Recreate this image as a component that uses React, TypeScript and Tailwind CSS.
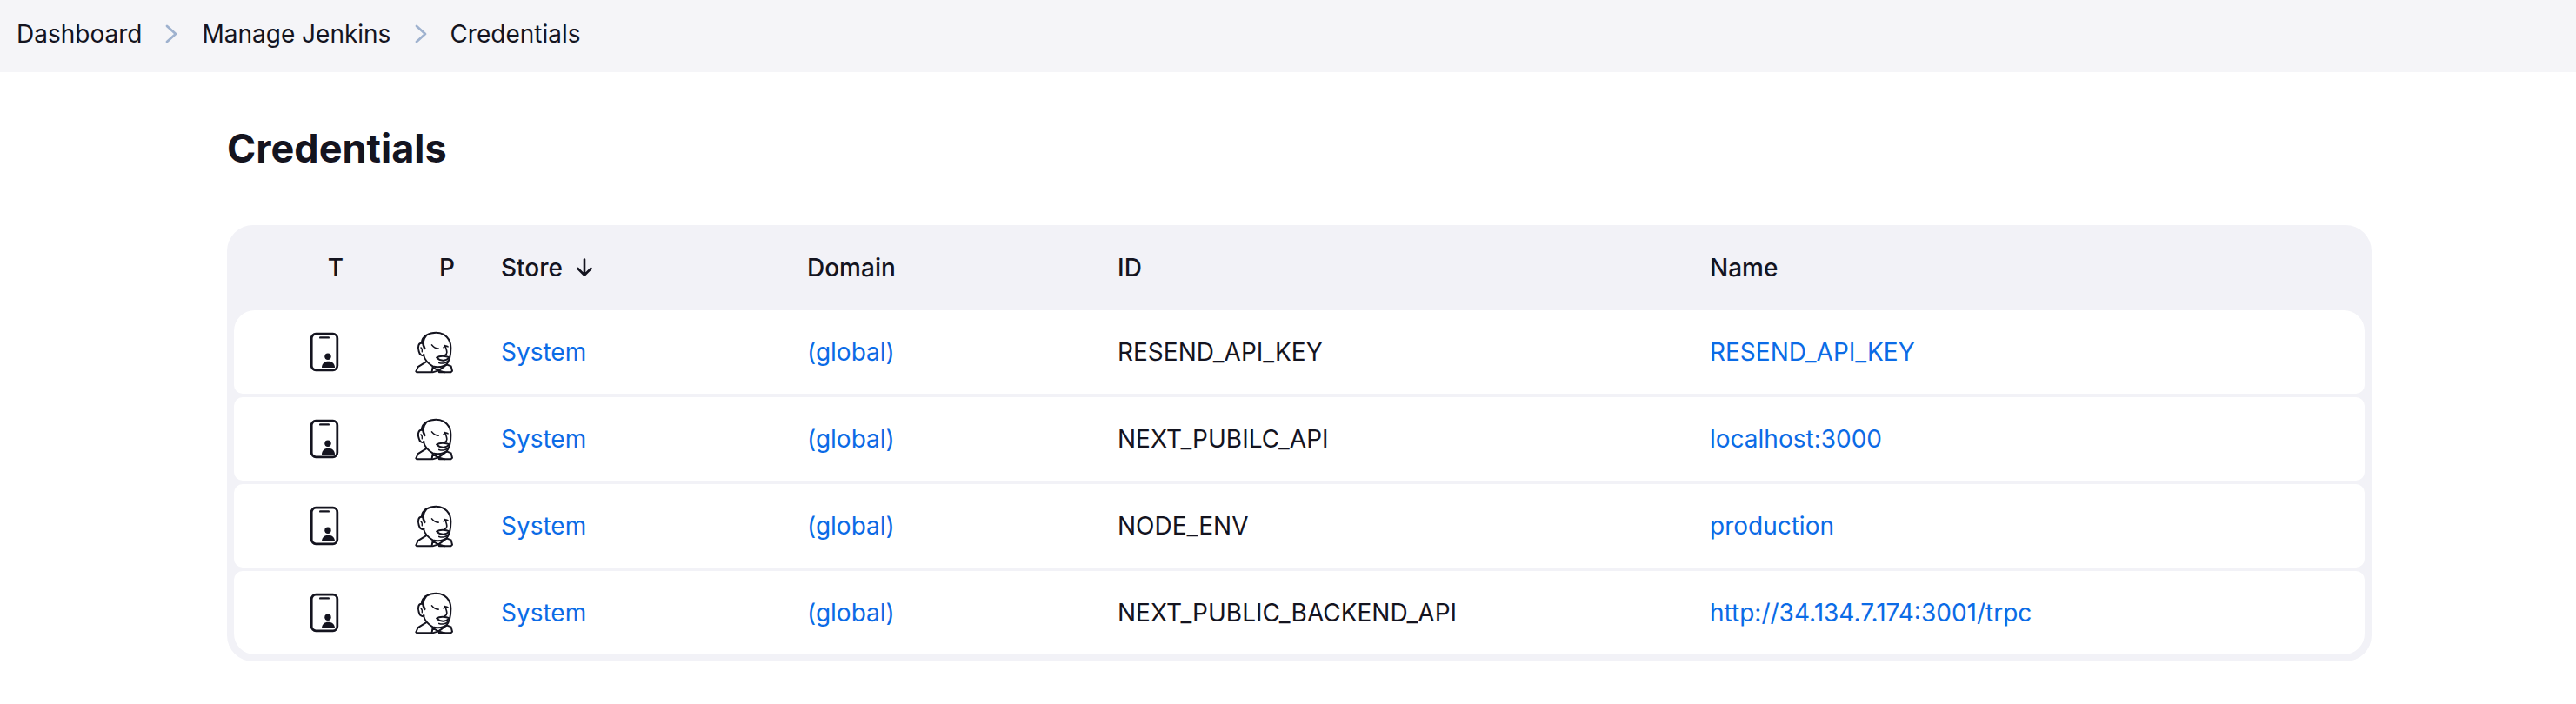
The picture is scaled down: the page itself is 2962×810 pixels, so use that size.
const rows = [
  ["RESEND_API_KEY", "RESEND_API_KEY"],
  ["NEXT_PUBILC_API", "localhost:3000"],
  ["NODE_ENV", "production"],
  ["NEXT_PUBLIC_BACKEND_API", "http://34.134.7.174:3001/trpc"],
];

function Chevron() {
  return (
    <svg width="16" height="22" viewBox="0 0 16 22" fill="none" className="shrink-0">
      <path d="M3 2l10 9-10 9" stroke="#9fb2cf" strokeWidth="2.8" strokeLinecap="round" strokeLinejoin="round" />
    </svg>
  );
}

function PhoneIcon() {
  return (
    <svg width="34" height="46" viewBox="0 0 34 46" fill="none">
      <rect x="2.2" y="2.2" width="29.6" height="41.6" rx="5" stroke="#14141f" strokeWidth="2.8" />
      <rect x="11" y="5.2" width="12" height="2.4" rx="1.2" fill="#14141f" />
      <circle cx="21" cy="28.3" r="3.7" fill="#14141f" />
      <path d="M14 41c0-4.6 3-7.2 7.5-7.2s7.5 2.6 7.5 7.2z" fill="#14141f" />
    </svg>
  );
}

function JenkinsIcon() {
  return (
    <svg width="48" height="52" viewBox="680 385 145 155" fill="none" stroke="#14141f" strokeWidth="6" strokeLinecap="round" strokeLinejoin="round">
      <path d="M710 428C712 408 735 395 760 395C790 395 812 418 811 450C811 475 806 495 795 507" />
      <path d="M711 432C699 430 695 445 700 460C703 473 712 478 718 472" />
      <path d="M716 472C720 490 733 503 748 512C762 516 782 514 795 507" />
      <path d="M724 406C712 420 714 438 720 450" strokeWidth="8" />
      <path d="M707 447C711 450 712 456 711 462" strokeWidth="4" />
      <path d="M725 497L697 514L690 530L693 533H745L748 516L768 527L785 515L796 506L812 512L816 528L811 533H772" />
      <path d="M748 533L768 527L790 533M768 527L770 533" strokeWidth="5" />
      <path d="M745 438C750 445 758 450 768 451" strokeWidth="5" />
      <path d="M786 447C790 442 796 441 801 444" strokeWidth="5" />
      <path d="M791 440C797 458 802 468 790 474" strokeWidth="5" />
      <path d="M762 482C772 474 795 476 806 482C796 494 774 496 762 482Z" strokeWidth="6" />
      <path d="M770 500C782 504 795 501 800 494" strokeWidth="5" />
    </svg>
  );
}

function ArrowDown() {
  return (
    <svg width="20" height="22" viewBox="0 0 20 22" fill="none" className="shrink-0">
      <path d="M10 1.5v18M2.5 12l7.5 7.5 7.5-7.5" stroke="#14141f" strokeWidth="2.6" strokeLinecap="round" strokeLinejoin="round" />
    </svg>
  );
}

export default function App() {
  return (
    <div className="min-h-[810px] bg-white text-[28px] leading-[34px] text-[#14141f] font-['Inter',sans-serif]">
      <nav className="flex h-[83px] items-center bg-[#f5f5f8] pl-[19px] pb-[6px]">
        <span>Dashboard</span>
        <span className="ml-[26px] mr-[27px]"><Chevron /></span>
        <span>Manage Jenkins</span>
        <span className="ml-[27px] mr-[25px]"><Chevron /></span>
        <span>Credentials</span>
      </nav>
      <main className="pl-[261px] pr-[235px]">
        <h1 className="pt-[59px] text-[45px] leading-[58px] font-bold">Credentials</h1>
        <div className="mt-[59px] rounded-[30px] bg-[#f2f2f7] px-[8px] pb-[8px]">
          <div className="flex h-[98px] items-center font-medium">
            <div className="w-[126px] text-right">T</div>
            <div className="w-[128px] text-right">P</div>
            <div className="flex w-[405px] items-center gap-[15px] pl-[53px]">Store <ArrowDown /></div>
            <div className="w-[357px]">Domain</div>
            <div className="w-[681px]">ID</div>
            <div>Name</div>
          </div>
          <div className="flex flex-col gap-[4px]">
            {rows.map(([id, name], i) => (
              <div
                key={id}
                className={
                  i === 0
                    ? "flex h-[96px] items-center rounded-t-[24px] rounded-b-[10px] bg-white"
                    : i === rows.length - 1
                      ? "flex h-[96px] items-center rounded-b-[24px] rounded-t-[10px] bg-white"
                      : "flex h-[96px] items-center rounded-[10px] bg-white"
                }
              >
                <div className="flex w-[126px] justify-end pr-[5px]"><PhoneIcon /></div>
                <div className="flex w-[128px] justify-end"><JenkinsIcon /></div>
                <div className="w-[405px] pl-[53px] text-[#0b6be6]">System</div>
                <div className="w-[357px] text-[#0b6be6]">(global)</div>
                <div className="w-[681px]">{id}</div>
                <div className="text-[#0b6be6]">{name}</div>
              </div>
            ))}
          </div>
        </div>
      </main>
    </div>
  );
}
